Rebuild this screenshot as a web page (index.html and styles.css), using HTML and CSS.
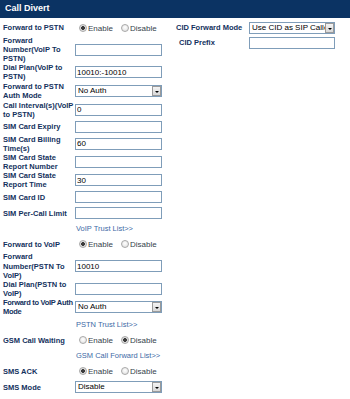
FILE: index.html
```html
<!DOCTYPE html>
<html>
<head>
<meta charset="utf-8">
<link rel="stylesheet" href="styles.css">
</head>
<body>
<div class="title">Call Divert</div>
<div class="body">
  <div class="col left">
    <div class="row"><div class="lbl">Forward to PSTN</div><div class="val"><label class="rad"><input type="radio" name="r1" checked>Enable</label><label class="rad"><input type="radio" name="r1">Disable</label></div></div>
    <div class="row"><div class="lbl">Forward Number(VoIP To PSTN)</div><div class="val"><input class="txt" type="text" value=""></div></div>
    <div class="row"><div class="lbl">Dial Plan(VoIP to PSTN)</div><div class="val"><input class="txt" type="text" value="10010:-10010"></div></div>
    <div class="row selrow"><div class="lbl">Forward to PSTN Auth Mode</div><div class="val"><div class="sel"><select><option>No Auth</option></select><span class="arr"></span></div></div></div>
    <div class="row"><div class="lbl">Call Interval(s)(VoIP to PSTN)</div><div class="val"><input class="txt" type="text" value="0"></div></div>
    <div class="row"><div class="lbl">SIM Card Expiry</div><div class="val"><input class="txt" type="text" value=""></div></div>
    <div class="row"><div class="lbl">SIM Card Billing Time(s)</div><div class="val"><input class="txt" type="text" value="60"></div></div>
    <div class="row"><div class="lbl">SIM Card State Report Number</div><div class="val"><input class="txt" type="text" value=""></div></div>
    <div class="row"><div class="lbl">SIM Card State Report Time</div><div class="val"><input class="txt" type="text" value="30"></div></div>
    <div class="row"><div class="lbl">SIM Card ID</div><div class="val"><input class="txt" type="text" value=""></div></div>
    <div class="row"><div class="lbl">SIM Per-Call Limit</div><div class="val"><input class="txt" type="text" value=""></div></div>
    <div class="row link-row"><div class="lbl"></div><div class="val"><a class="lnk" href="#">VoIP Trust List&gt;&gt;</a></div></div>
    <div class="row"><div class="lbl">Forward to VoIP</div><div class="val"><label class="rad"><input type="radio" name="r2" checked>Enable</label><label class="rad"><input type="radio" name="r2">Disable</label></div></div>
    <div class="row"><div class="lbl">Forward Number(PSTN To VoIP)</div><div class="val"><input class="txt" type="text" value="10010"></div></div>
    <div class="row"><div class="lbl">Dial Plan(PSTN to VoIP)</div><div class="val"><input class="txt" type="text" value=""></div></div>
    <div class="row selrow"><div class="lbl wide">Forward to VoIP Auth Mode</div><div class="val"><div class="sel"><select><option>No Auth</option></select><span class="arr"></span></div></div></div>
    <div class="row link-row"><div class="lbl"></div><div class="val"><a class="lnk" href="#">PSTN Trust List&gt;&gt;</a></div></div>
    <div class="row"><div class="lbl">GSM Call Waiting</div><div class="val"><label class="rad"><input type="radio" name="r3">Enable</label><label class="rad"><input type="radio" name="r3" checked>Disable</label></div></div>
    <div class="row link-row"><div class="lbl"></div><div class="val"><a class="lnk" href="#">GSM Call Forward List&gt;&gt;</a></div></div>
    <div class="row"><div class="lbl">SMS ACK</div><div class="val"><label class="rad"><input type="radio" name="r4" checked>Enable</label><label class="rad"><input type="radio" name="r4">Disable</label></div></div>
    <div class="row"><div class="lbl">SMS Mode</div><div class="val"><div class="sel"><select><option>Disable</option></select><span class="arr"></span></div></div></div>
  </div>
  <div class="col right">
    <div class="row rrow"><div class="lbl">CID Forward Mode</div><div class="val"><div class="sel rsel"><select><option>Use CID as SIP Caller</option></select><span class="arr"></span></div></div></div>
    <div class="row rrow"><div class="lbl ind">CID Prefix</div><div class="val"><input class="txt rtxt" type="text" value=""></div></div>
  </div>
</div>
</body>
</html>
```

FILE: styles.css
```css
html, body {
  margin: 0;
  padding: 0;
  background: #ffffff;
  font-family: "Liberation Sans", Arial, sans-serif;
}

.title {
  background: #0b3363;
  color: #ffffff;
  font-weight: bold;
  font-size: 9px;
  height: 18px;
  line-height: 17px;
  padding-left: 5px;
  box-sizing: border-box;
}

.body {
  display: flex;
  padding-top: 2px;
}

.left {
  width: 173px;
  padding-left: 3px;
}

.row {
  display: grid;
  grid-template-columns: 72px auto;
  align-items: center;
  min-height: 16px;
}

.selrow {
  padding: 0.5px 0;
}

.link-row {
  min-height: 15px;
}

.lbl {
  font-weight: bold;
  font-size: 7.5px;
  line-height: 9.1px;
  color: #13315d;
}

.wide {
  margin-right: -5px;
  letter-spacing: -0.3px;
}

.ind {
  padding-left: 3px;
}

.val {
  display: flex;
  align-items: center;
}

.txt {
  width: 87px;
  height: 12px;
  box-sizing: border-box;
  border: 1px solid #7f9db9;
  margin: 0;
  padding: 0 1px;
  font-family: "Liberation Sans", Arial, sans-serif;
  font-size: 8px;
  color: #000000;
  background: #ffffff;
  outline: none;
}

.sel {
  position: relative;
  width: 87px;
  height: 12px;
  box-sizing: border-box;
  border: 1px solid #7f9db9;
  background: #ffffff;
}

.sel select {
  -webkit-appearance: none;
  appearance: none;
  display: block;
  width: 100%;
  height: 10px;
  border: none;
  margin: 0;
  padding: 0 0 0 2px;
  font-family: "Liberation Sans", Arial, sans-serif;
  font-size: 8px;
  line-height: 10px;
  color: #000000;
  background: #ffffff;
  outline: none;
}

.arr {
  position: absolute;
  right: 0;
  top: 0;
  width: 9px;
  height: 10px;
  box-sizing: border-box;
  background: linear-gradient(#f4f4f4, #d8d8d8);
  border: 1px solid #9a9a9a;
}

.arr::after {
  content: "";
  position: absolute;
  left: 2px;
  top: 4px;
  border-left: 2px solid transparent;
  border-right: 2px solid transparent;
  border-top: 2px solid #000000;
}

.rad {
  display: flex;
  align-items: center;
  font-size: 8px;
  color: #363f4c;
  margin-right: 4px;
}

.rad input {
  -webkit-appearance: none;
  appearance: none;
  width: 8px;
  height: 8px;
  margin: 0 1px 0 4px;
  border: 1px solid #a8a8a8;
  border-radius: 50%;
  box-sizing: border-box;
  background: radial-gradient(circle at 50% 40%, #ffffff 0%, #dcdcdc 100%);
}

.rad input:checked {
  background: radial-gradient(circle, #3c3c3c 0, #3c3c3c 1.6px, #e4e4e4 2.2px, #d0d0d0 100%);
}

.lnk {
  font-size: 7.5px;
  color: #3d6aa6;
  text-decoration: none;
  margin-left: 1px;
}

.right {
  width: 170px;
}

.rrow {
  grid-template-columns: 73px auto;
  min-height: 15px;
}

.rsel, .rtxt {
  width: 86px;
}
```
